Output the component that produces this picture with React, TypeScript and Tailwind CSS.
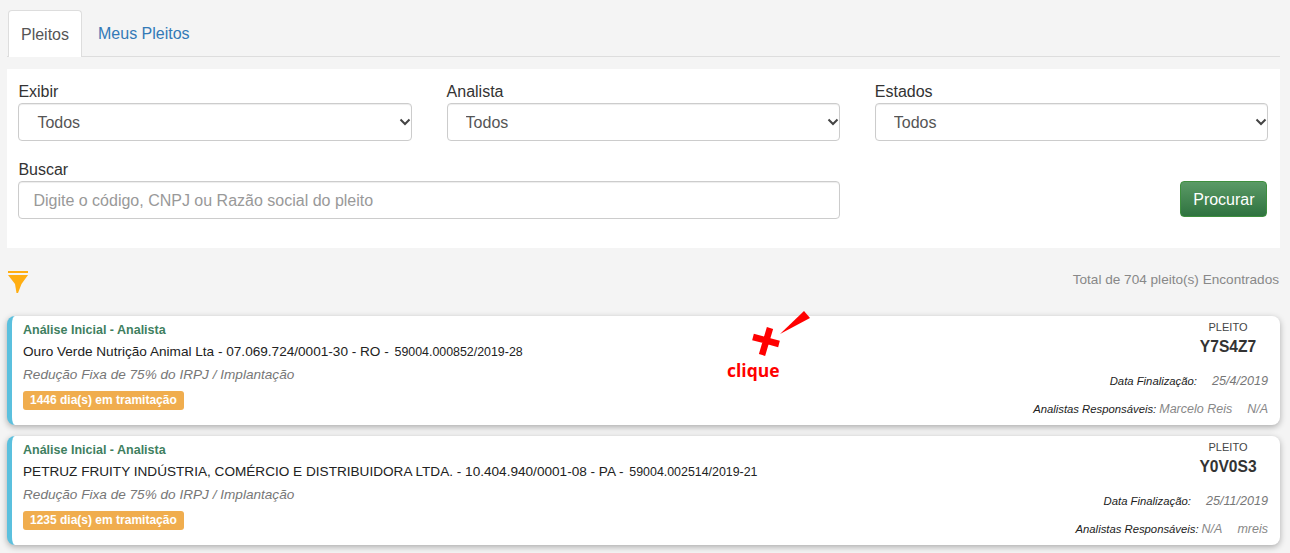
import React from 'react';

interface Pleito {
  empresa: string;
  processo: string;
  dias: string;
  codigo: string;
  data: string;
  analistas: string[];
}

const PLEITOS: Pleito[] = [
  {
    empresa: 'Ouro Verde Nutrição Animal Lta - 07.069.724/0001-30 - RO - ',
    processo: '59004.000852/2019-28',
    dias: '1446 dia(s) em tramitação',
    codigo: 'Y7S4Z7',
    data: '25/4/2019',
    analistas: ['Marcelo Reis', 'N/A'],
  },
  {
    empresa: 'PETRUZ FRUITY INDÚSTRIA, COMÉRCIO E DISTRIBUIDORA LTDA. - 10.404.940/0001-08 - PA - ',
    processo: '59004.002514/2019-21',
    dias: '1235 dia(s) em tramitação',
    codigo: 'Y0V0S3',
    data: '25/11/2019',
    analistas: ['N/A', 'mreis'],
  },
];

function SelectField({ label }: { label: string }) {
  return (
    <div>
      <label className="block text-[16px] leading-[22px] pt-[1px] text-[#333]">{label}</label>
      <div className="relative">
        <select className="block w-full h-[38px] pl-[18px] pr-6 pt-[1px] appearance-none bg-white border border-[#ccc] rounded-[4px] text-[16px] text-[#555] shadow-[inset_0_1px_1px_rgba(0,0,0,0.075)]">
          <option>Todos</option>
        </select>
        <svg width="12" height="8" viewBox="0 0 12 8" className="absolute right-[1px] top-[15px] pointer-events-none">
          <path d="M1.5 1.5 L6 6 L10.5 1.5" fill="none" stroke="#444" strokeWidth="2" />
        </svg>
      </div>
    </div>
  );
}

function PleitoCard({ pleito, annotated }: { pleito: Pleito; annotated?: boolean }) {
  return (
    <div className="relative h-[109px] bg-white rounded-[8px] border-l-[5px] border-l-[#5bc0de] shadow-[0_2px_6px_rgba(0,0,0,0.3)] flex justify-between pl-[11px] pr-[12px]">
      <div className="pt-[6px]">
        <div className="text-[12.5px] leading-[16px] font-bold text-[#3f7f5f]">Análise Inicial - Analista</div>
        <div className="text-[13.6px] leading-[16px] mt-[6px] text-[#222]">
          {pleito.empresa}
          <span className="ml-[2px] text-[12.4px]">{pleito.processo}</span>
        </div>
        <div className="text-[13.6px] leading-[16px] mt-[7px] italic text-[#777]">Redução Fixa de 75% do IRPJ / Implantação</div>
        <div className="inline-block mt-[8px] h-[19px] px-[7px] rounded-[3px] bg-[#f0ad4e] text-white text-[12px] leading-[19px] font-bold">
          {pleito.dias}
        </div>
      </div>
      <div className="flex flex-col items-end">
        <div className="w-[80px] text-center pt-[5px]">
          <div className="text-[11px] leading-[13px] text-[#444]">PLEITO</div>
          <div className="text-[15.6px] leading-[18px] mt-[4px] font-bold text-[#333]">{pleito.codigo}</div>
        </div>
        <div className="mt-[17px] text-[12.6px] leading-[16px] italic flex items-baseline">
          <span className="text-[11.3px] text-[#222]">Data Finalização:</span>
          <span className="ml-[15px] text-[#777]">{pleito.data}</span>
        </div>
        <div className="mt-[12px] text-[12.5px] leading-[16px] italic flex items-baseline">
          <span className="text-[11.3px] text-[#222]">Analistas Responsáveis:</span>
          <span className="ml-[3px] text-[#888]">{pleito.analistas[0]}</span>
          <span className="ml-[15px] text-[#888]">{pleito.analistas[1]}</span>
        </div>
      </div>
      {annotated && (
        <div className="absolute left-[715px] top-[-9px] w-[90px] h-[80px]">
          <svg width="90" height="52" viewBox="0 0 90 52" className="absolute left-0 top-0">
            <path d="M26 30 L52 37 M43 21 L35 48" stroke="#ff0000" strokeWidth="6.5" />
            <path d="M53 27 L77 4 L83 11 Z" fill="#ff0000" />
          </svg>
          <div className="absolute left-0 top-[52px] text-[17.5px] leading-[22px] font-bold text-[#ff0000] font-['Open_Sans',sans-serif]">clique</div>
        </div>
      )}
    </div>
  );
}

export default function App() {
  return (
    <div className="h-[553px] overflow-hidden bg-[#f4f4f4] pl-[7px] pr-[10px] pt-[10px] font-['Liberation_Sans',Arial,sans-serif]">
      {/* Tabs */}
      <div className="flex h-[47px] border-b border-[#ddd]">
        <div className="w-[74px] h-[47px] ml-[1px] bg-white border border-[#ddd] border-b-0 rounded-t-[4px] text-[16px] leading-[47px] text-center text-[#555]">Pleitos</div>
        <div className="ml-[16px] text-[16px] leading-[47px] text-[#337ab7]">Meus Pleitos</div>
      </div>

      {/* Filtros */}
      <div className="mt-[12px] h-[179px] bg-white pl-[11.4px] pr-[12px] pt-[11px]">
        <div className="grid grid-cols-3 gap-x-[35px]">
          <SelectField label="Exibir" />
          <SelectField label="Analista" />
          <SelectField label="Estados" />
        </div>
        <div className="grid grid-cols-3 gap-x-[35px] mt-[18px]">
          <div className="col-span-2">
            <label className="block text-[16px] leading-[22px] text-[#333]">Buscar</label>
            <input
              type="text"
              placeholder="Digite o código, CNPJ ou Razão social do pleito"
              className="block w-full h-[38px] px-[14px] pt-[1px] bg-white border border-[#ccc] rounded-[4px] text-[16px] text-[#555] placeholder:text-[#999] shadow-[inset_0_1px_1px_rgba(0,0,0,0.075)]"
            />
          </div>
          <div className="flex justify-end items-start pt-[22px]">
            <button className="w-[87px] h-[36px] pt-[1px] mr-[0.6px] rounded-[4px] border border-[#3e8f3e] bg-gradient-to-b from-[#5a9a66] to-[#2f7340] text-white text-[16px]">Procurar</button>
          </div>
        </div>
      </div>

      {/* Resumo */}
      <div className="flex justify-between items-start h-[68px] pt-[23px]">
        <svg width="21" height="23" viewBox="0 0 21 23" className="ml-[1px]">
          <rect x="0" y="0" width="20" height="2" fill="#ffae12" />
          <path d="M0 4 H20 L13.5 13 L10 22 L8.5 22 L7 13 Z" fill="#ffae12" />
        </svg>
        <div className="text-[13.6px] leading-[16px] mt-[1px] text-[#888] mr-[1px]">Total de 704 pleito(s) Encontrados</div>
      </div>

      {/* Lista */}
      <div className="flex flex-col gap-[11px]">
        {PLEITOS.map((p, i) => (
          <PleitoCard key={p.codigo} pleito={p} annotated={i === 0} />
        ))}
      </div>
    </div>
  );
}
